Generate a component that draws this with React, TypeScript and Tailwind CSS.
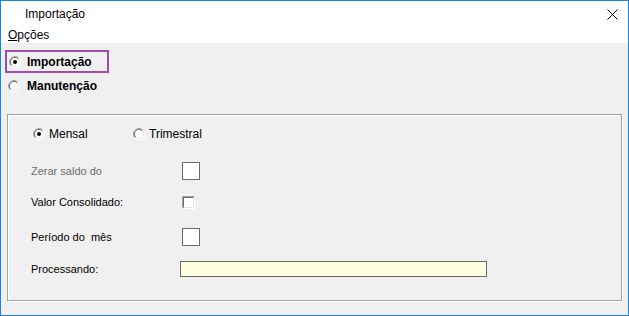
import { ReactNode } from "react";

// classic win32 radio glyph
const Radio = ({ checked }: { checked?: boolean }) => (
    <svg width="12" height="12" viewBox="0 0 12 12" className="shrink-0">
        <circle cx="6" cy="6" r="5.5" fill="#ffffff" />
        <path d="M2.1 9.9 A5.5 5.5 0 0 1 9.9 2.1" fill="none" stroke="#a0a0a0" strokeWidth="1" />
        <path d="M9.9 2.1 A5.5 5.5 0 0 1 2.1 9.9" fill="none" stroke="#ffffff" strokeWidth="1" />
        <path d="M2.8 9.2 A4.5 4.5 0 0 1 9.2 2.8" fill="none" stroke="#696969" strokeWidth="1" />
        <path d="M9.2 2.8 A4.5 4.5 0 0 1 2.8 9.2" fill="none" stroke="#e3e3e3" strokeWidth="1" />
        {checked && <circle cx="6" cy="6" r="2" fill="#000000" />}
    </svg>
);

// plain flat box, 18px
const BigBox = () => <div className="w-[18px] h-[18px] border border-[#6b6b6b] bg-white" />;

// sunken 3d check box
const SmallBox = () => (
    <div className="w-[13px] h-[13px] border border-t-[#a0a0a0] border-l-[#a0a0a0] border-b-white border-r-white">
        <div className="w-full h-full bg-white border border-t-[#696969] border-l-[#696969] border-b-[#e3e3e3] border-r-[#e3e3e3]" />
    </div>
);

// label + control row inside the group box
const Row = ({ label, muted, className, children }: { label: string; muted?: boolean; className: string; children: ReactNode }) => (
    <div className={`flex items-center h-[20px] ${className}`}>
        <span className={`w-[174px] shrink-0 pl-[23px] ${muted ? "text-[#6d6d6d]" : "text-black"}`}>{label}</span>
        {children}
    </div>
);

export default function App() {
    return (
        <div
            className="w-[629px] h-[316px] border border-[#1883d7] flex flex-col bg-[#f0f0f0] text-[11px] text-black"
            style={{ fontFamily: '"Liberation Sans", Arial, sans-serif' }}
        >
            {/* title bar */}
            <div className="h-[26px] bg-white flex items-center justify-between text-[12px]">
                <span className="pl-[24px]">Importação</span>
                <svg width="11" height="11" viewBox="0 0 11 11" className="mr-[10px]">
                    <path d="M0.5 0.5 L10.5 10.5 M10.5 0.5 L0.5 10.5" stroke="#000" strokeWidth="1" />
                </svg>
            </div>

            {/* menu */}
            <div className="h-[16px] bg-white flex items-center text-[12px]">
                <span className="pl-[7px]"><span className="underline">O</span>pções</span>
            </div>

            {/* mode radios */}
            <div className="mt-[7px] ml-[4px] w-[104px] h-[23px] border-2 border-[#9c4fa8] flex items-center gap-[6px] pl-[2px]">
                <Radio checked />
                <span className="font-bold text-[12px]">Importação</span>
            </div>
            <div className="mt-[3px] ml-[7px] h-[20px] flex items-center gap-[7px]">
                <Radio />
                <span className="font-bold text-[12px]">Manutenção</span>
            </div>

            {/* options group */}
            <div className="mt-[18px] mx-[6px] h-[187px] border border-[#a0a0a0] shadow-[1px_1px_0_#ffffff,inset_1px_1px_0_#ffffff] flex flex-col">
                <div className="mt-[9px] h-[20px] flex items-center pl-[25px]">
                    <Radio checked />
                    <span className="ml-[4px] w-[84px] text-[12px]">Mensal</span>
                    <Radio />
                    <span className="ml-[4px] text-[12px]">Trimestral</span>
                </div>
                <Row label="Zerar saldo do" muted className="mt-[17px]">
                    <BigBox />
                </Row>
                <Row label="Valor Consolidado:" className="mt-[11px]">
                    <SmallBox />
                </Row>
                <Row label="Período do  mês" className="mt-[15px] whitespace-pre">
                    <BigBox />
                </Row>
                <Row label="Processando:" className="mt-[12px]">
                    <div className="-ml-[2px] w-[307px] h-[16px] border border-[#6b6b6b] bg-[#ffffe1]" />
                </Row>
            </div>
        </div>
    );
}
